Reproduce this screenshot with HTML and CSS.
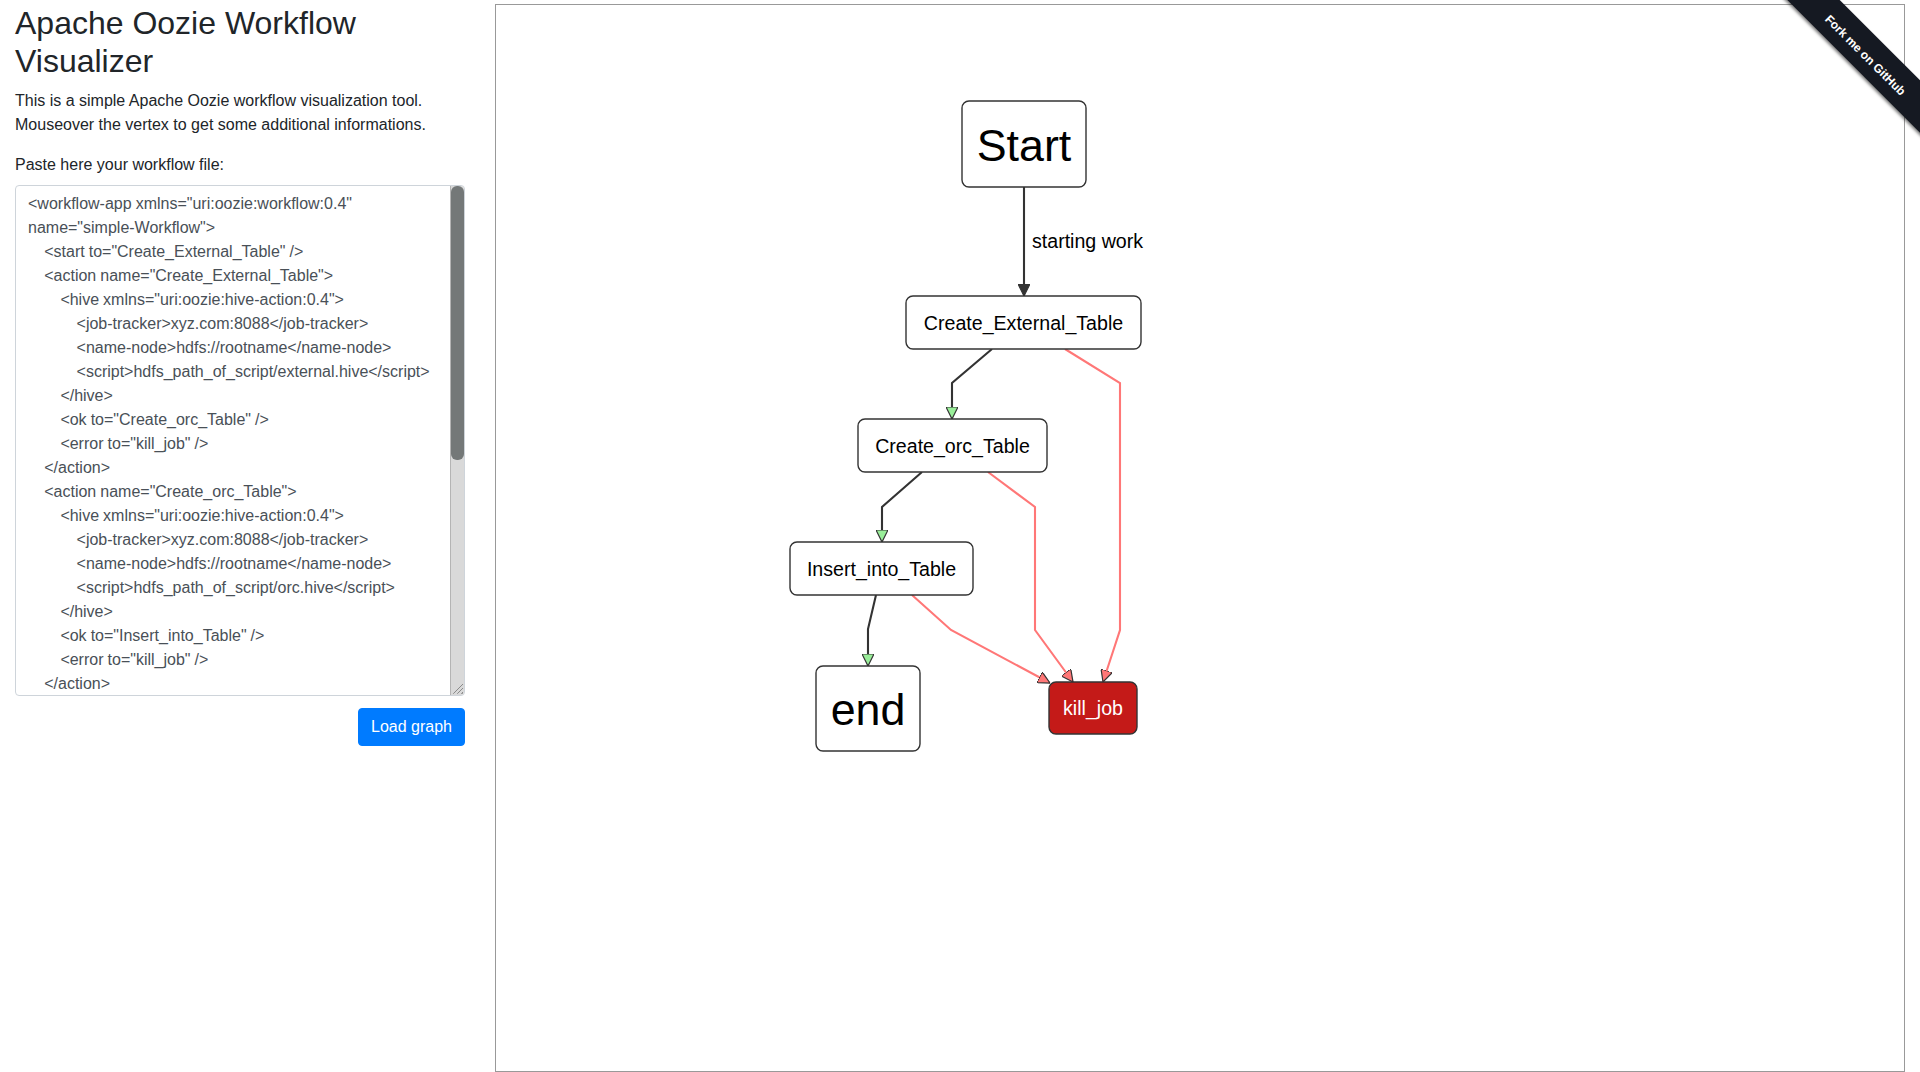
FILE: index.html
```html
<!DOCTYPE html>
<html lang="en">
<head>
  <meta charset="UTF-8" />
  <meta name="viewport" content="width=device-width, initial-scale=1.0"/>
  <title>Apache Oozie Workflow Visualizer</title>
  <link rel="stylesheet" href="styles.css">
</head>
<body>

<a class="fork-ribbon" href="#"><span class="fork-band">Fork me on GitHub</span></a>

<div class="page">
  <!-- left side: intro + input -->
  <div class="sidebar">
    <h2 class="title">Apache Oozie Workflow Visualizer</h2>
    <p class="intro">This is a simple Apache Oozie workflow visualization tool. Mouseover the vertex to get some additional informations.</p>
    <label class="paste-label" for="workflow">Paste here your workflow file:</label>
    <div class="input-wrap">
      <textarea class="workflow-input" id="workflow" spellcheck="false">
&lt;workflow-app xmlns="uri:oozie:workflow:0.4" name="simple-Workflow"&gt;
    &lt;start to="Create_External_Table" /&gt;
    &lt;action name="Create_External_Table"&gt;
        &lt;hive xmlns="uri:oozie:hive-action:0.4"&gt;
            &lt;job-tracker&gt;xyz.com:8088&lt;/job-tracker&gt;
            &lt;name-node&gt;hdfs://rootname&lt;/name-node&gt;
            &lt;script&gt;hdfs_path_of_script/external.hive&lt;/script&gt;
        &lt;/hive&gt;
        &lt;ok to="Create_orc_Table" /&gt;
        &lt;error to="kill_job" /&gt;
    &lt;/action&gt;
    &lt;action name="Create_orc_Table"&gt;
        &lt;hive xmlns="uri:oozie:hive-action:0.4"&gt;
            &lt;job-tracker&gt;xyz.com:8088&lt;/job-tracker&gt;
            &lt;name-node&gt;hdfs://rootname&lt;/name-node&gt;
            &lt;script&gt;hdfs_path_of_script/orc.hive&lt;/script&gt;
        &lt;/hive&gt;
        &lt;ok to="Insert_into_Table" /&gt;
        &lt;error to="kill_job" /&gt;
    &lt;/action&gt;
    &lt;action name="Insert_into_Table"&gt;
        &lt;hive xmlns="uri:oozie:hive-action:0.4"&gt;
            &lt;job-tracker&gt;xyz.com:8088&lt;/job-tracker&gt;
            &lt;name-node&gt;hdfs://rootname&lt;/name-node&gt;
            &lt;script&gt;hdfs_path_of_script/Copydata.hive&lt;/script&gt;
            &lt;param&gt;database_name&lt;/param&gt;
        &lt;/hive&gt;
        &lt;ok to="end" /&gt;
        &lt;error to="kill_job" /&gt;
    &lt;/action&gt;
    &lt;kill name="kill_job"&gt;
        &lt;message&gt;Job failed, error message[${wf:errorMessage(wf:lastErrorNode())}]&lt;/message&gt;
    &lt;/kill&gt;
    &lt;end name="end" /&gt;
&lt;/workflow-app&gt;</textarea>
      <!-- drawn scrollbar (the real one is hidden in the capture) -->
      <div class="fake-scroll"><div class="fake-thumb"></div></div>
    </div>
    <div class="actions">
      <button class="btn-load" type="button">Load graph</button>
    </div>
  </div>

  <!-- right side: the graph -->
  <div class="graph-col">
    <div class="graph-panel">
      <svg class="graph" width="100%" height="100%">
        <defs>
          <marker id="head-black" viewBox="0 0 10 10" refX="10" refY="5" markerUnits="userSpaceOnUse" markerWidth="12" markerHeight="12" orient="auto">
            <path d="M0,0 L10,5 L0,10 z" class="head head-black"/>
          </marker>
          <marker id="head-green" viewBox="0 0 10 10" refX="10" refY="5" markerUnits="userSpaceOnUse" markerWidth="12" markerHeight="12" orient="auto">
            <path d="M0,0 L10,5 L0,10 z" class="head head-green"/>
          </marker>
          <marker id="head-red" viewBox="0 0 10 10" refX="10" refY="5" markerUnits="userSpaceOnUse" markerWidth="12" markerHeight="12" orient="auto">
            <path d="M0,0 L10,5 L0,10 z" class="head head-red"/>
          </marker>
        </defs>

        <!-- edges -->
        <polyline class="edge" points="528,182 528,291" marker-end="url(#head-black)"/>
        <text class="edge-label" x="536" y="243">starting work</text>
        <polyline class="edge" points="496,344 456,378 456,414" marker-end="url(#head-green)"/>
        <polyline class="edge" points="426,467 386,502 386,537" marker-end="url(#head-green)"/>
        <polyline class="edge" points="380,590 372,624 372,661" marker-end="url(#head-green)"/>
        <polyline class="edge edge-error" points="416,590 455,625 554,678" marker-end="url(#head-red)"/>
        <polyline class="edge edge-error" points="492,467 539,502 539,625 577,677" marker-end="url(#head-red)"/>
        <polyline class="edge edge-error" points="569,344 624,378 624,625 607,677" marker-end="url(#head-red)"/>

        <!-- nodes -->
        <rect class="node" x="466" y="96" width="124" height="86" rx="7"/>
        <text class="node-label big" x="528" y="156">Start</text>

        <rect class="node" x="410" y="291" width="235" height="53" rx="7"/>
        <text class="node-label" x="527.5" y="325">Create_External_Table</text>

        <rect class="node" x="362" y="414" width="189" height="53" rx="7"/>
        <text class="node-label" x="456.5" y="447.5">Create_orc_Table</text>

        <rect class="node" x="294" y="537" width="183" height="53" rx="7"/>
        <text class="node-label" x="385.5" y="570.5">Insert_into_Table</text>

        <rect class="node" x="320" y="661" width="104" height="85" rx="7"/>
        <text class="node-label big" x="372" y="720">end</text>

        <rect class="node node-kill" x="553" y="677" width="88" height="52" rx="7"/>
        <text class="node-label kill-label" x="597" y="710">kill_job</text>
      </svg>
    </div>
  </div>
</div>

</body>
</html>
```

FILE: styles.css
```css
/* reset + base font */
* {
  box-sizing: border-box;
}
body {
  margin: 0;
  font-family: "Liberation Sans", Arial, sans-serif;
  font-size: 16px;
  line-height: 24px;
  color: #212529;
  background: #fff;
  overflow: hidden;
}

/* two columns: 25% / 75% */
.page {
  display: flex;
}
.sidebar {
  width: 25%;
  padding: 4px 15px 0;
}
.graph-col {
  width: 75%;
  padding: 0 15px;
}

/* left column */
.title {
  margin: 0 0 8px;
  font-size: 32px;
  font-weight: 400;
  line-height: 1.2;
}
.intro {
  margin: 0 0 16px;
}
.paste-label {
  display: inline-block;
  margin-bottom: 8px;
}
.input-wrap {
  position: relative;
}
.workflow-input {
  display: block;
  width: 100%;
  height: 511px;
  padding: 6px 25px 6px 12px;
  border: 1px solid #ced4da;
  border-radius: 4px;
  font-family: "Liberation Sans", Arial, sans-serif;
  font-size: 16px;
  line-height: 24px;
  word-spacing: -0.4px;
  color: #495057;
  background: #fff;
  outline: none;
  overflow: hidden;
  resize: none;
}
.fake-scroll {
  position: absolute;
  top: 1px;
  right: 1px;
  bottom: 1px;
  width: 14px;
  background: #d9d9d9;
  border-left: 1px solid #b4b4b4;
  border-radius: 0 3px 3px 0;
}
.fake-thumb {
  height: 274px;
  background: #747878;
  border-radius: 6px;
}
/* resize grip in the bottom corner */
.fake-scroll::after {
  content: "";
  position: absolute;
  right: 1px;
  bottom: 1px;
  width: 11px;
  height: 11px;
  background:
    repeating-linear-gradient(135deg, transparent 0 2px, #8a8a8a 2px 3px);
  clip-path: polygon(100% 0, 100% 100%, 0 100%);
}

.actions {
  display: flex;
  justify-content: flex-end;
  margin-top: 12px;
}
.btn-load {
  padding: 6px 12px;
  border: 1px solid #007bff;
  border-radius: 4px;
  background: #007bff;
  color: #fff;
  font-family: "Liberation Sans", Arial, sans-serif;
  font-size: 16px;
  line-height: 24px;
  cursor: pointer;
}
.btn-load:hover {
  background: #0069d9;
}

/* graph area */
.graph-panel {
  margin-top: 4px;
  height: 1068px;
  border: 1px solid #999;
}
.graph {
  display: block;
}
.node {
  fill: #fff;
  stroke: #333;
  stroke-width: 1.4;
}
.node-kill {
  fill: #c41a18;
}
.node-label {
  font-family: "Liberation Sans", Arial, sans-serif;
  font-size: 19.6px;
  fill: #000;
  text-anchor: middle;
}
.node-label.big {
  font-size: 44.8px;
}
.kill-label {
  fill: #fff;
}
.edge {
  fill: none;
  stroke: #333;
  stroke-width: 2.1;
}
.edge-error {
  stroke: #ff7777;
}
.edge-label {
  font-family: "Liberation Sans", Arial, sans-serif;
  font-size: 19.6px;
  fill: #000;
}
.head {
  stroke: #333;
  stroke-width: 1;
}
.head-black { fill: #333; }
.head-green { fill: #99ee99; }
.head-red { fill: #ff7777; }

/* fork ribbon, top right corner */
.fork-ribbon {
  position: absolute;
  top: 0;
  right: 0;
  width: 150px;
  height: 150px;
  overflow: hidden;
  z-index: 10;
  text-decoration: none;
}
.fork-band {
  position: absolute;
  left: -13px;
  top: 35px;
  width: 220px;
  height: 37px;
  transform: rotate(45deg);
  background: #151922;
  box-shadow: 0 2px 3px rgba(0,0,0,0.5);
  color: #fff;
  font-family: "Liberation Sans", Arial, sans-serif;
  font-weight: 700;
  font-size: 12px;
  line-height: 43px;
  text-align: center;
  overflow: hidden;
}
```
